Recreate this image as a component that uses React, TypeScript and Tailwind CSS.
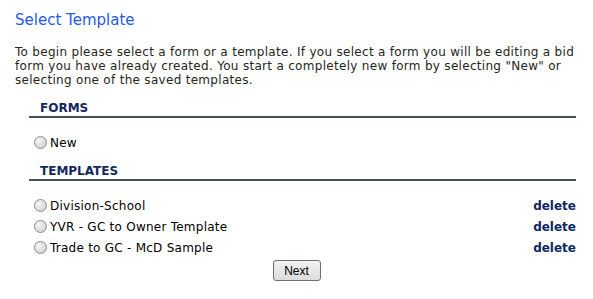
const sans = { fontFamily: '"DejaVu Sans", Verdana, sans-serif' };

const forms = ['New'];
const templates = ['Division-School', 'YVR - GC to Owner Template', 'Trade to GC - McD Sample'];

function Radio() {
  return (
    <span className="inline-block h-[13px] w-[13px] shrink-0 rounded-full border border-[#8f8f8f] bg-[radial-gradient(circle_at_35%_35%,#f6f6f6,#c9c9c9)]" />
  );
}

function SectionHeader({ title }: { title: string }) {
  return (
    <div className="border-b-2 border-[#435353] pb-[1px] pl-[11px] text-[12px] font-bold leading-[13px] text-[#14285e]">
      {title}
    </div>
  );
}

function Row({ label, deletable }: { label: string; deletable?: boolean }) {
  return (
    <div className="flex h-[21px] items-center justify-between">
      <label className="flex items-center gap-[3px] pl-[5px] text-[12px] tracking-[0.25px] text-black">
        <Radio />
        <span>{label}</span>
      </label>
      {deletable && <span className="text-[12px] font-bold text-[#0c2761]">delete</span>}
    </div>
  );
}

export default function App() {
  return (
    <div className="h-[299px] w-[593px] bg-white px-[15px] pt-[11px]" style={sans}>
      <h1 className="text-[15px] leading-[18px] text-[#2659e8]">Select Template</h1>
      <p className="mt-[16px] w-[565px] text-[12px] leading-[14px] tracking-[0.3px] text-[#26261a]">
        To begin please select a form or a template. If you select a form you will be editing a bid form you have
        already created. You start a completely new form by selecting "New" or selecting one of the saved templates.
      </p>

      <div className="ml-[14px] w-[547px]">
        <div className="mt-[15px]">
          <SectionHeader title="FORMS" />
          <div className="pt-[14px]">
            {forms.map(f => (
              <Row key={f} label={f} />
            ))}
          </div>
        </div>

        <div className="mt-[12px]">
          <SectionHeader title="TEMPLATES" />
          <div className="pt-[14px]">
            {templates.map(t => (
              <Row key={t} label={t} deletable />
            ))}
          </div>
        </div>
      </div>

      <div className="mt-[2px] flex justify-center">
        <button
          className="h-[21px] w-[48px] rounded-[3px] border border-[#707070] bg-linear-to-b from-[#f2f2f2] to-[#dcdcdc] text-[12px] text-black"
          style={{ fontFamily: '"Liberation Sans", Arial, sans-serif' }}
        >
          Next
        </button>
      </div>
    </div>
  );
}
